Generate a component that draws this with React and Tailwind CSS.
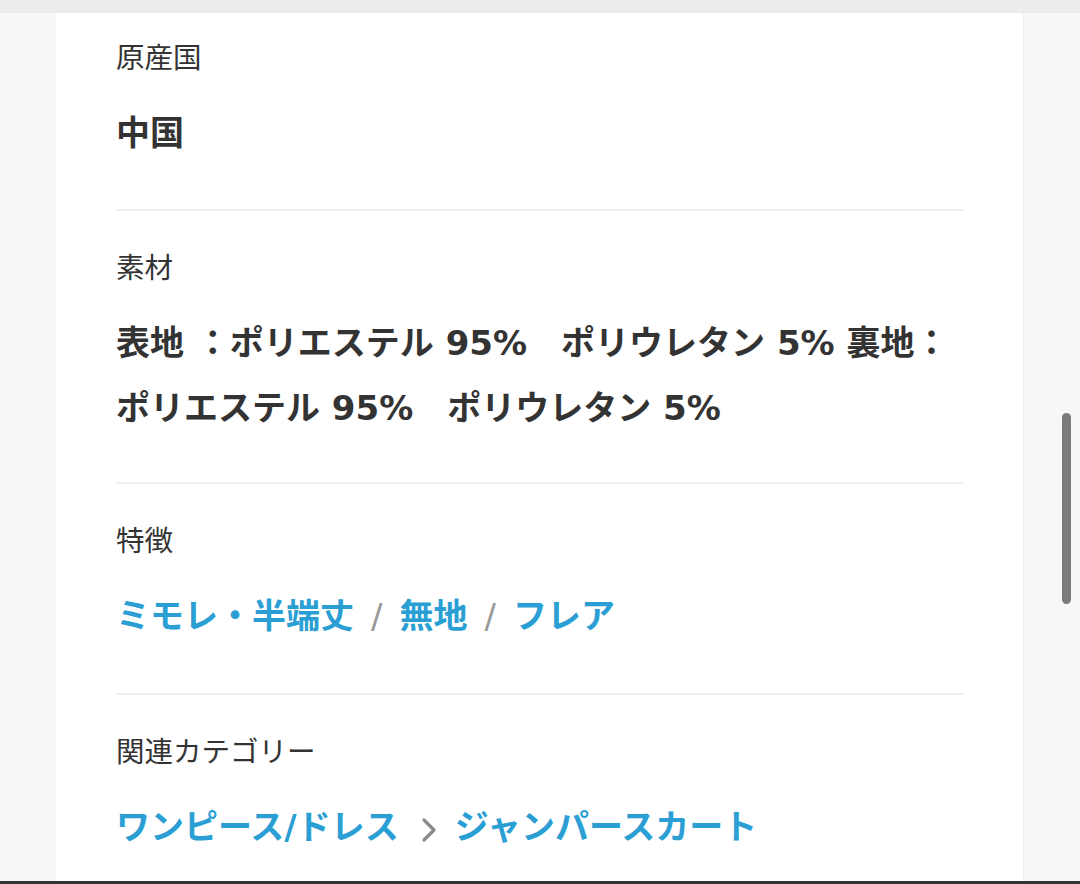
import { Fragment } from 'react'

const FONT = { fontFamily: '"DejaVu Sans", "Noto Sans CJK JP", "Noto Sans", sans-serif' }

function Label({ children }) {
  return <div className="pt-[2px] text-[28.5px] leading-[40px] text-[#333]">{children}</div>
}

function Value({ children }) {
  return <div className="mt-[22px] text-[34px] leading-[65px] font-bold text-[#333]">{children}</div>
}

function Chevron() {
  return (
    <svg width="20" height="26" viewBox="0 0 20 26" className="ml-[20px] mr-[16px] inline-block align-middle">
      <path d="M5 3 L15 13 L5 23" fill="none" stroke="#8a8a8a" strokeWidth="3.2" strokeLinecap="round" strokeLinejoin="round" />
    </svg>
  )
}

const features = ['ミモレ・半端丈', '無地', 'フレア']

export default function App() {
  return (
    <div className="relative h-[884px] w-full overflow-hidden bg-[#f7f7f7] flex flex-col" style={FONT}>
      <div className="h-[13px] bg-[#ececec] shrink-0" />
      <div className="flex flex-1 min-h-0">
        <div className="w-[56px] shrink-0" />
        <div className="w-[967px] shrink-0 bg-white px-[60px] shadow-[1px_0_3px_rgba(0,0,0,0.04)]">
          {/* 原産国 */}
          <section className="pt-[24px] pb-[43px] border-b-2 border-[#f0f0f0]">
            <Label>原産国</Label>
            <Value>中国</Value>
          </section>

          {/* 素材 */}
          <section className="pt-[36px] pb-[41px] border-b-2 border-[#f0f0f0]">
            <Label>素材</Label>
            <Value>表地 ：ポリエステル 95%　ポリウレタン 5% 裏地：ポリエステル 95%　ポリウレタン 5%</Value>
          </section>

          {/* 特徴 */}
          <section className="pt-[36px] pb-[44px] border-b-2 border-[#f0f0f0]">
            <Label>特徴</Label>
            <Value>
              {features.map((f, i) => (
                <Fragment key={f}>
                  {i > 0 && <span className="mx-[17px] font-normal text-[#999]">/</span>}
                  <a className="text-[#2b9fd4]">{f}</a>
                </Fragment>
              ))}
            </Value>
          </section>

          {/* 関連カテゴリー */}
          <section className="pt-[36px] pb-[45px]">
            <Label>関連カテゴリー</Label>
            <Value>
              <a className="text-[#2b9fd4]">ワンピース/ドレス</a>
              <Chevron />
              <a className="text-[#2b9fd4]">ジャンパースカート</a>
            </Value>
          </section>
        </div>
        <div className="flex-1" />
      </div>
      <div className="h-[3px] bg-[#333] shrink-0" />
      <div className="absolute left-[1062px] top-[413px] h-[191px] w-[9px] rounded-full bg-[#7a7a7a]" />
    </div>
  )
}
